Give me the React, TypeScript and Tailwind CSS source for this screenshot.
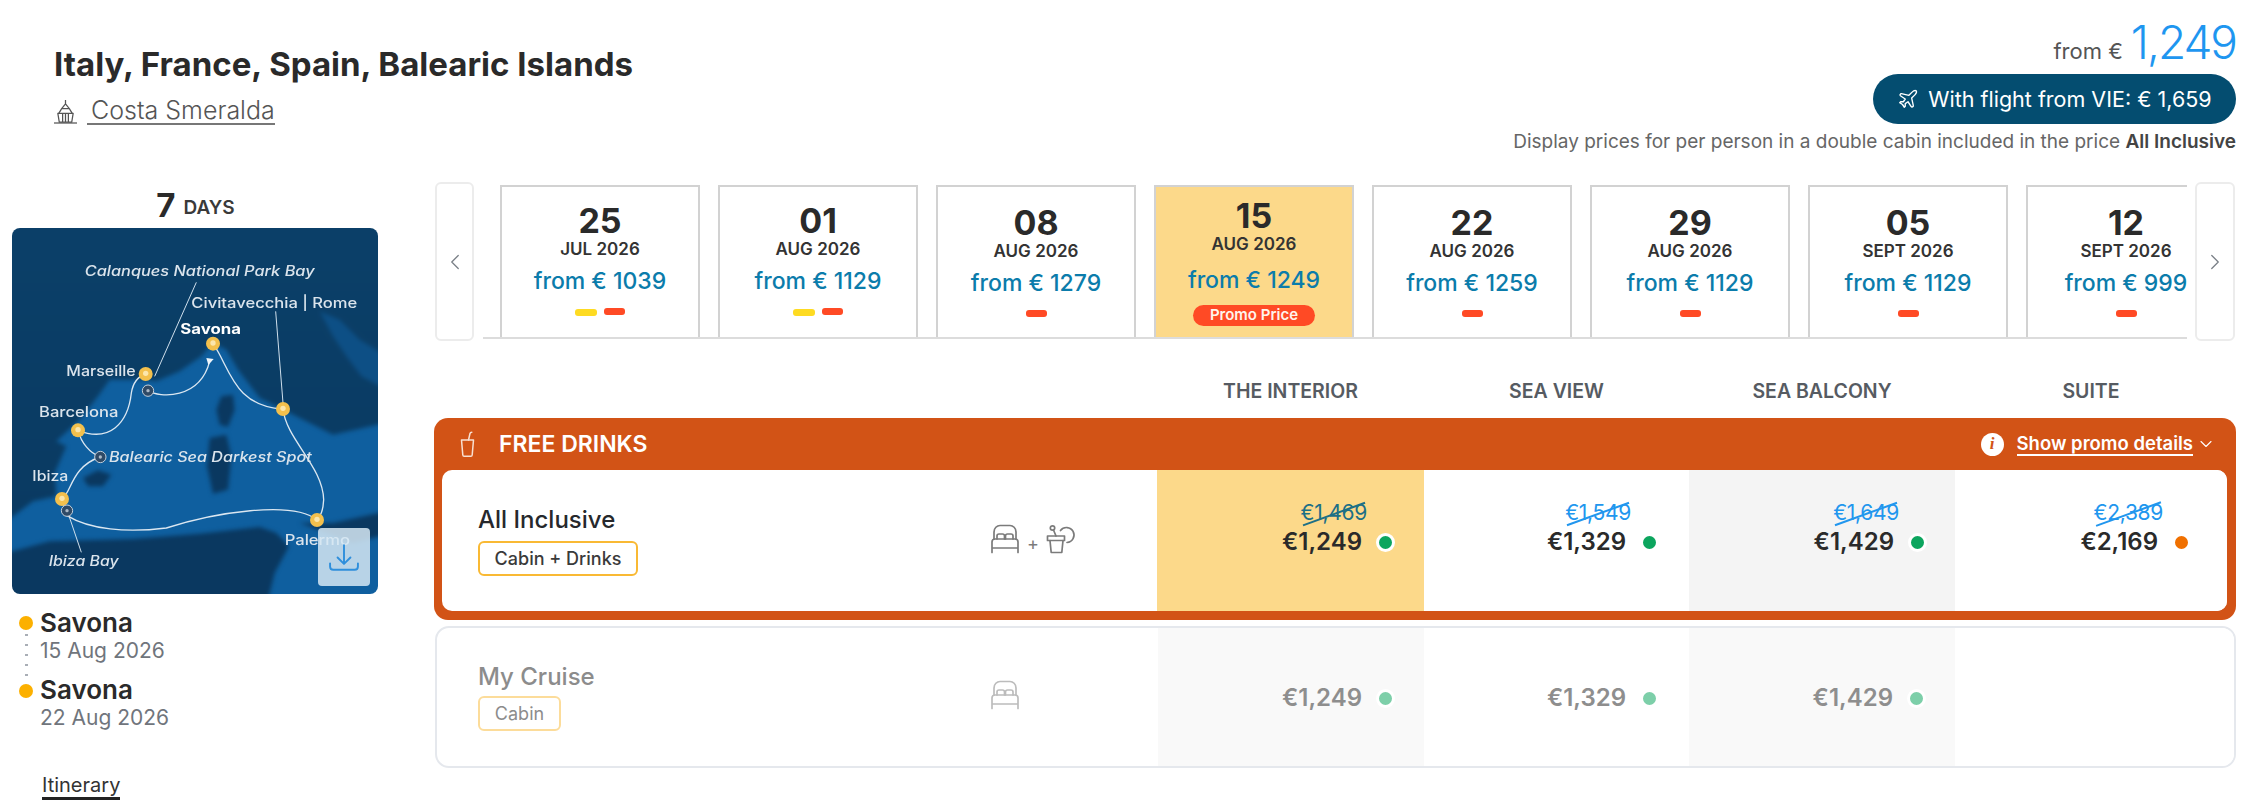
import React from "react";
import { ChevronDown, ChevronLeft, ChevronRight, Plane } from "lucide-react";

type Departure = {
  day: string;
  month: string;
  price: string;
  pills: string[];
  offset: string;
  selected?: boolean;
};

const departures: Departure[] = [
  { day: "25", month: "JUL 2026", price: "from € 1039", pills: ["y", "r"], offset: "pt-[17px]" },
  { day: "01", month: "AUG 2026", price: "from € 1129", pills: ["y", "r"], offset: "pt-[17px]" },
  { day: "08", month: "AUG 2026", price: "from € 1279", pills: ["r"], offset: "pt-[19px]" },
  { day: "15", month: "AUG 2026", price: "from € 1249", pills: [], offset: "pt-[12px]", selected: true },
  { day: "22", month: "AUG 2026", price: "from € 1259", pills: ["r"], offset: "pt-[19px]" },
  { day: "29", month: "AUG 2026", price: "from € 1129", pills: ["r"], offset: "pt-[19px]" },
  { day: "05", month: "SEPT 2026", price: "from € 1129", pills: ["r"], offset: "pt-[19px]" },
  { day: "12", month: "SEPT 2026", price: "from € 999", pills: ["r"], offset: "pt-[19px]" },
];

const BedIcon = () => (
  <svg viewBox="0 0 30 30" fill="none" stroke="currentColor" strokeWidth="1.700" strokeLinecap="round" strokeLinejoin="round" className="h-[30px] w-[30px]">
    <path d="M4 15V8c0-4 3-6.500 6-6.500h10c3 0 6 2.500 6 6.500v7" />
    <path d="M7 15v-3c0-1.200.8-2 2-2h3.500c1.200 0 2 .8 2 2v3M15.500 15v-3c0-1.200.8-2 2-2H21c1.200 0 2 .8 2 2v3" />
    <path d="M2 28.500V18c0-1.800 1.200-3 3-3h20c1.800 0 3 1.200 3 3v10.500M2 24h26" />
  </svg>
);

const DrinkIcon = () => (
  <svg viewBox="0 0 30 30" fill="none" stroke="currentColor" strokeWidth="1.700" strokeLinecap="round" strokeLinejoin="round" className="h-[30px] w-[30px]">
    <path d="M1.500 12h17v4.500h-1.500l-1.200 12H5.200L4 16.500H1.500z" />
    <path d="M4 16.500h13" />
    <path d="M10 12 7.500 6" />
    <circle cx="6.500" cy="4" r="2.200" />
    <path d="M14.500 6.500a7.500 7.500 0 1 1 6.500 12" />
  </svg>
);

const ShipIcon = () => (
  <svg viewBox="0 0 24 26" fill="none" stroke="currentColor" strokeWidth="1.300" strokeLinejoin="round" className="h-[25px] w-[23px] text-[#555]">
    <path d="M12 1v4M8 10l4-5 4 5M5 15l3-5h8l3 5" />
    <path d="M4 15h16l-1.500 9h-13zM9 15v9M15 15v9M12 15v9" />
    <path d="M0 25h24" />
  </svg>
);

const CupIcon = () => (
  <svg viewBox="0 0 16 26" fill="none" stroke="currentColor" strokeWidth="1.500" strokeLinecap="round" strokeLinejoin="round" className="h-[26px] w-[16px] text-[#f8e0d2]">
    <path d="M1.500 9h12l-1.300 15c-.1.800-.6 1.200-1.300 1.200H4.100c-.7 0-1.200-.4-1.300-1.200z" />
    <path d="M8.500 9 10 2.500c.2-.8.800-1.200 1.800-1.200" />
  </svg>
);

const MapLabel = ({ x, y, w, italic, bold, children }: { x: number; y: number; w: number; italic?: boolean; bold?: boolean; children: string }) => (
  <text
    x={x}
    y={y}
    textLength={w}
    lengthAdjust="spacingAndGlyphs"
    fontSize="42"
    fontStyle={italic ? "italic" : "normal"}
    fontWeight={bold ? 700 : 500}
    fill={bold ? "#ffffff" : "#dbe4ec"}
  >
    {children}
  </text>
);

const RouteMap = () => {
  const stops = [
    [640, 492],
    [438, 583],
    [235, 752],
    [187, 958],
    [952, 1021],
    [850, 688],
  ];
  const anchors = [
    [445, 633],
    [302, 832],
    [202, 993],
  ];
  return (
    <div className="relative h-[366px] w-[366px] overflow-hidden rounded-[8px]">
      <svg viewBox="37 145 1098 1098" className="h-full w-full blur-[0.6px]">
        <defs>
          <linearGradient id="land" x1="0" y1="0" x2="0" y2="1">
            <stop offset="0" stopColor="#0b4069" />
            <stop offset="1" stopColor="#0a3a62" />
          </linearGradient>
        </defs>
        <rect x="37" y="145" width="1098" height="1098" fill="#0f5f9f" />
        <g className="blur-[6px]">
          {/* land north of the sea */}
          <path
            fill="url(#land)"
            d="M0 100H1180V725L1000 765 870 700 780 655 715 570 680 510 640 490 605 530 540 575 470 605 430 600 330 600 295 650 240 720 170 785 200 800 165 880 170 950 100 965 0 1040z"
          />
          {/* adriatic */}
          <path
            fill="#0d4f85"
            d="M960 395 1020 420 1080 480 1180 540V640L1085 590 1040 530 1000 470z"
          />
          {/* africa */}
          <path fill="#0a3860" d="M0 1280V1125L150 1085 400 1078 600 1062 780 1042 830 1060 868 1100 825 1180 800 1280z" />
          {/* islands */}
          <path fill="#0a3860" d="M665 650 700 645 705 690 685 742 660 735 650 690z" />
          <path fill="#0a3860" d="M630 775 680 765 695 830 685 930 640 942 622 860z" />
          <path fill="#0a3860" d="M250 895 295 872 335 885 310 920 265 920z" />
          <path fill="#0a3860" d="M900 1030 1000 1030 1180 990V1060L1060 1090 960 1052z" />
        </g>
        <path fill="none" stroke="#cfdfec" strokeWidth="3" d="M590 308 465 590M828 395 850 670M205 1000 245 1118" />
        <path
          fill="none"
          stroke="#dbe7f1"
          strokeWidth="4"
          d="M640 492C690 560 700 680 850 688C860 780 970 860 972 960C970 1000 960 1010 952 1021C880 960 640 1000 500 1045C380 1060 270 1050 202 1008L187 958C215 940 215 860 302 832C270 820 245 790 235 752C330 790 385 730 395 640C400 610 415 590 438 583M445 633C480 655 600 660 630 545"
        />
        <path fill="#eef5fa" d="M620 535 642 538 626 556z" />
        {stops.map(([x, y]) => (
          <g key={`${x}-${y}`}>
            <circle cx={x} cy={y} r="21" fill="#f3c04d" />
            <circle cx={x} cy={y - 2} r="8" fill="#fbe6ad" />
          </g>
        ))}
        {anchors.map(([x, y]) => (
          <g key={`${x}-${y}`}>
            <circle cx={x} cy={y} r="17" fill="#2f4a66" stroke="#c4d0db" strokeWidth="3" />
            <circle cx={x} cy={y} r="5" fill="#aab8c6" />
          </g>
        ))}
        <MapLabel x={255} y={290} w={690} italic>Calanques National Park Bay</MapLabel>
        <MapLabel x={575} y={386} w={498}>Civitavecchia | Rome</MapLabel>
        <MapLabel x={542} y={462} w={182} bold>Savona</MapLabel>
        <MapLabel x={200} y={588} w={208}>Marseille</MapLabel>
        <MapLabel x={118} y={712} w={238}>Barcelona</MapLabel>
        <MapLabel x={328} y={846} w={608} italic>Balearic Sea Darkest Spot</MapLabel>
        <MapLabel x={98} y={904} w={108}>Ibiza</MapLabel>
        <MapLabel x={855} y={1097} w={196}>Palermo</MapLabel>
        <MapLabel x={147} y={1158} w={210} italic>Ibiza Bay</MapLabel>
      </svg>
      <div className="absolute left-[306px] top-[300px] flex h-[58px] w-[52px] items-center justify-center rounded-[4px] bg-[#d6e7f3]/85">
        <svg viewBox="0 0 28 28" fill="none" stroke="#2f8fdc" strokeWidth="1.800" strokeLinecap="round" strokeLinejoin="round" className="mt-[2px] h-[30px] w-[30px]">
          <path d="M14 2v17M8 13.500l6 6 6-6" />
          <path d="M1 19v3c0 1.500 1 3 3 3h20c2 0 3-1.500 3-3v-3" />
        </svg>
      </div>
    </div>
  );
};

const Sidebar = () => (
  <div className="ml-[12px] w-[366px] shrink-0">
    <div className="flex h-[46px] items-center justify-center gap-[8px] pl-[1px] text-[#2a2a2a]">
      <span className="text-[33px] font-bold leading-none">7</span>
      <span className="mt-[5px] text-[19px] font-semibold leading-none text-[#3a3a3a]">DAYS</span>
    </div>
    <RouteMap />
    <div className="mt-[15px] flex pl-[7px]">
      <div className="mt-[7px] flex h-[82px] w-[14px] flex-col items-center">
        <span className="h-[14px] w-[14px] shrink-0 rounded-full bg-[#fcb000]" />
        <span className="w-[3px] flex-1 bg-[radial-gradient(circle,#a9aeb6_1.5px,transparent_1.5px)] bg-[length:3px_10px]" />
        <span className="h-[14px] w-[14px] shrink-0 rounded-full bg-[#fcb000]" />
      </div>
      <div className="ml-[7px]">
        <div className="text-[26px] font-semibold leading-[28px] text-[#2a2a2a]">Savona</div>
        <div className="text-[21px] leading-[28px] text-[#70757c]">15 Aug 2026</div>
        <div className="mt-[11px] text-[26px] font-semibold leading-[28px] text-[#2a2a2a]">Savona</div>
        <div className="text-[21px] leading-[28px] text-[#70757c]">22 Aug 2026</div>
      </div>
    </div>
    <div className="ml-[30px] mt-[41px] w-fit border-b-[3px] border-[#222] text-[20px] leading-[24px] text-[#333]">Itinerary</div>
  </div>
);

const DateCard = ({ item }: { item: Departure }) => (
  <div
    className={`flex h-[152px] w-[200px] shrink-0 flex-col items-center border-2 border-b-0 border-[#d2d2d2] ${item.offset} ${item.selected ? "bg-[#fcd98a]" : "bg-white"}`}
  >
    <div className="text-[34px] font-bold leading-[34px] text-[#2a2a2a]">{item.day}</div>
    <div className="text-[17px] font-semibold leading-[22px] text-[#333]">{item.month}</div>
    <div className={`text-[23px] font-medium leading-[30px] text-[#0b7cab] ${item.selected ? "mt-[10px]" : "mt-[6px]"}`}>{item.price}</div>
    {item.pills.length > 0 && (
      <div className="mt-[12px] flex gap-[7px]">
        {item.pills.map((p, i) =>
          p === "y" ? (
            <span key={i} className="mt-[1px] h-[7px] w-[22px] rounded-[3px] bg-[#fedb22]" />
          ) : (
            <span key={i} className="h-[7px] w-[21px] rounded-[3px] bg-[#ff4a25]" />
          ),
        )}
      </div>
    )}
    {item.selected && (
      <div className="mt-[10px] flex h-[21px] w-[122px] items-center justify-center rounded-full bg-[#ff4a25] text-[15px] font-semibold text-[#fff4ec]">
        Promo Price
      </div>
    )}
  </div>
);

const Carousel = () => (
  <div className="flex h-[159px] items-start">
    <button className="ml-[1px] flex h-[159px] w-[39px] items-center justify-center rounded-[6px] border-2 border-[#ececec] text-[#7a8087]">
      <ChevronLeft size={26} strokeWidth={1.200} />
    </button>
    <div className="ml-[9px] mt-[3px] flex h-[154px] w-[1704px] gap-[18px] overflow-hidden border-b-2 border-[#dcdcdc] pl-[17px]">
      {departures.map((d) => (
        <DateCard key={d.day} item={d} />
      ))}
    </div>
    <button className="ml-[8px] flex h-[159px] w-[40px] items-center justify-center rounded-[6px] border-2 border-[#ececec] text-[#7a8087]">
      <ChevronRight size={26} strokeWidth={1.200} />
    </button>
  </div>
);

const Dot = ({ color }: { color: string }) => (
  <span className={`ml-[14px] h-[19px] w-[19px] shrink-0 rounded-full border-[3px] border-white ${color}`} />
);

const PriceCell = ({
  width,
  padding,
  bg,
  old,
  oldColor,
  price,
  dot,
}: {
  width: string;
  padding: string;
  bg: string;
  old: string;
  oldColor: string;
  price: string;
  dot: string;
}) => (
  <div className={`flex flex-col items-end pt-[30px] ${width} ${padding} ${bg}`}>
    <span className={`relative mr-[28px] text-[21px] leading-[26px] tracking-[-0.3px] ${oldColor}`}>
      {old}
      <span className="absolute left-0 top-[13px] h-[2px] w-full -rotate-[20deg] bg-current" />
    </span>
    <div className="mt-[1px] flex items-center">
      <span className="text-[24px] font-semibold leading-[30px] text-[#2a2a2a]">{price}</span>
      <Dot color={dot} />
    </div>
  </div>
);

const FadedCell = ({ width, padding, bg, price }: { width: string; padding: string; bg: string; price?: string }) => (
  <div className={`flex items-center justify-end pt-[2px] ${width} ${padding} ${bg}`}>
    {price && (
      <>
        <span className="text-[24px] font-semibold leading-[30px] text-[#8e8e8e]">{price}</span>
        <Dot color="bg-[#7dcfa9]" />
      </>
    )}
  </div>
);

const FareTable = () => (
  <div>
    <div className="ml-[723px] mt-[36px] flex h-[30px] items-center text-center text-[19.5px] font-semibold text-[#565b62]">
      <div className="w-[267px]">THE INTERIOR</div>
      <div className="w-[265px]">SEA VIEW</div>
      <div className="w-[266px]">SEA BALCONY</div>
      <div className="w-[272px]">SUITE</div>
    </div>

    <div className="mt-[11px] h-[202px] w-[1802px] rounded-[14px] bg-[#d25316] px-[8px]">
      <div className="flex h-[52px] items-center text-white">
        <span className="ml-[18px]"><CupIcon /></span>
        <span className="ml-[23px] text-[23px] font-semibold">FREE DRINKS</span>
        <span className="ml-auto flex h-[23px] w-[23px] items-center justify-center rounded-full bg-white font-['Liberation_Serif',serif] text-[17px] font-bold italic text-[#d25316]">
          i
        </span>
        <span className="ml-[13px] border-b-2 border-white text-[18.5px] font-semibold leading-[22px]">Show promo details</span>
        <ChevronDown size={20} strokeWidth={1.300} className="ml-[3px] mr-[12px]" />
      </div>
      <div className="flex h-[141px] w-[1785px] overflow-hidden rounded-[10px] bg-white">
        <div className="flex w-[715px] items-start">
          <div className="w-[548px] pl-[36px] pt-[35px]">
            <div className="text-[24px] font-medium leading-[30px] text-[#26282c]">All Inclusive</div>
            <span className="mt-[6px] inline-flex h-[35px] w-[160px] items-center justify-center rounded-[6px] border-2 border-[#f9b934] text-[18px] font-medium text-[#3a3a3a]">
              Cabin + Drinks
            </span>
          </div>
          <div className="mt-[54px] flex items-end text-[#7b7b7b]">
            <BedIcon />
            <span className="mx-[7px] text-[18px] leading-[20px]">+</span>
            <DrinkIcon />
          </div>
        </div>
        <PriceCell width="w-[267px]" padding="pr-[29px]" bg="bg-[#fcd98a]" old="€1,469" oldColor="text-[#1d6f86]" price="€1,249" dot="bg-[#0ca55e]" />
        <PriceCell width="w-[265px]" padding="pr-[30px]" bg="bg-white" old="€1,549" oldColor="text-[#2196ee]" price="€1,329" dot="bg-[#0ca55e]" />
        <PriceCell width="w-[266px]" padding="pr-[28px]" bg="bg-[#f4f4f4]" old="€1,649" oldColor="text-[#2196ee]" price="€1,429" dot="bg-[#0ca55e]" />
        <PriceCell width="w-[272px]" padding="pr-[36px]" bg="bg-white" old="€2,389" oldColor="text-[#2196ee]" price="€2,169" dot="bg-[#f07000]" />
      </div>
    </div>

    <div className="ml-[1px] mt-[6px] flex h-[142px] w-[1801px] overflow-hidden rounded-[14px] border-2 border-[#e5e8ed] bg-white">
      <div className="flex w-[721px] items-start">
        <div className="w-[553px] pl-[41px] pt-[34px]">
          <div className="text-[24px] font-medium leading-[30px] text-[#8c8c8c]">My Cruise</div>
          <span className="mt-[4px] inline-flex h-[35px] w-[83px] items-center justify-center rounded-[6px] border-2 border-[#fcdc9a] text-[18px] text-[#8c8c8c]">
            Cabin
          </span>
        </div>
        <div className="mt-[52px] text-[#bcbcbc]">
          <BedIcon />
        </div>
      </div>
      <FadedCell width="w-[266px]" padding="pr-[29px]" bg="bg-[#f9f9f9]" price="€1,249" />
      <FadedCell width="w-[265px]" padding="pr-[30px]" bg="bg-white" price="€1,329" />
      <FadedCell width="w-[266px]" padding="pr-[29px]" bg="bg-[#f9f9f9]" price="€1,429" />
      <FadedCell width="flex-1" padding="" bg="bg-white" />
    </div>
  </div>
);

export default function App() {
  return (
    <div className="h-[800px] w-[2250px] overflow-hidden bg-white font-['Inter',sans-serif]">
      <header className="flex h-[182px] justify-between pl-[54px] pr-[14px]">
        <div className="pt-[44px]">
          <h1 className="text-[33px] font-bold leading-[40px] text-[#2a2a2a]">Italy, France, Spain, Balearic Islands</h1>
          <div className="mt-[12px] flex h-[30px] items-center">
            <ShipIcon />
            <a className="ml-[10px] border-b-2 border-[#777] pl-[4px] text-[25px] font-light leading-[26px] text-[#555]">Costa Smeralda</a>
          </div>
        </div>
        <div className="flex flex-col items-end pt-[18px]">
          <div className="flex h-[48px] items-baseline">
            <span className="text-[22px] text-[#555]">from €</span>
            <span className="ml-[8px] text-[46px] font-light leading-[48px] tracking-[-2px] text-[#1e96f0]">1,249</span>
          </div>
          <button className="mt-[8px] flex h-[50px] w-[363px] items-center justify-center gap-[9px] rounded-full bg-[#044d70] text-[21.5px] text-white">
            <Plane size={22} strokeWidth={1.500} />
            With flight from VIE: € 1,659
          </button>
          <p className="mt-[6px] text-[19px] leading-[24px] text-[#666]">
            Display prices for per person in a double cabin included in the price <b className="font-semibold text-[#444]">All Inclusive</b>
          </p>
        </div>
      </header>

      <div className="flex">
        <Sidebar />
        <main className="ml-[56px] w-[1802px]">
          <Carousel />
          <FareTable />
        </main>
      </div>
    </div>
  );
}
